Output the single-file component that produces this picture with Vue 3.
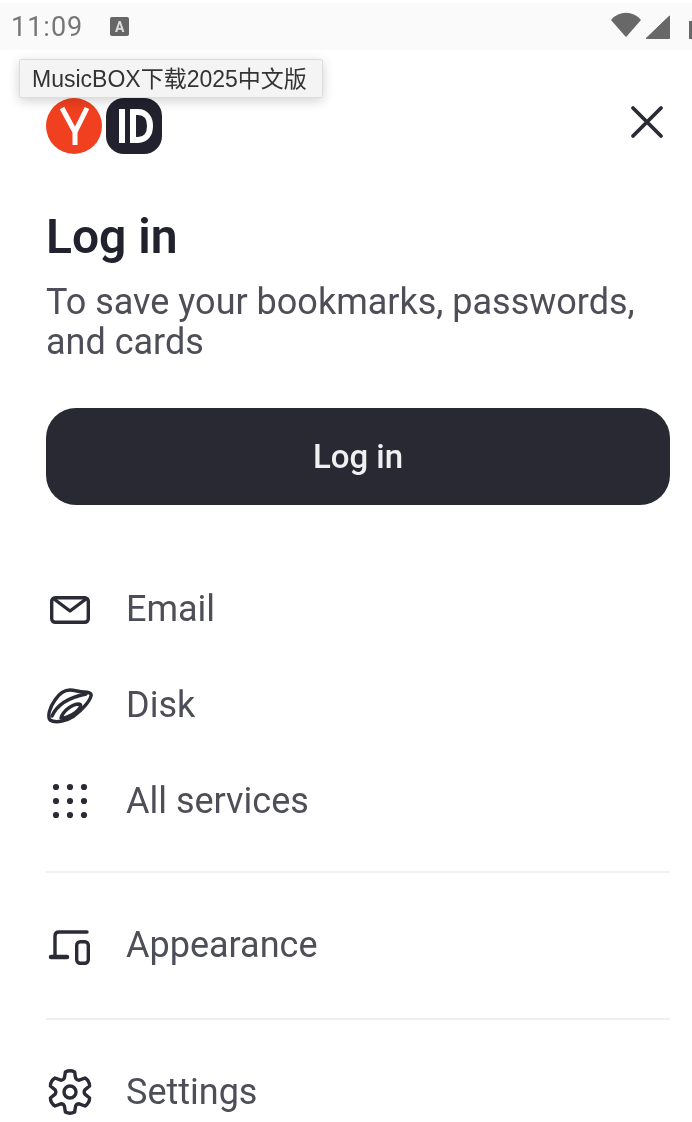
<template>
  <div class="screen">
    <div class="status-bar">
      <div class="status-left">
        <span class="time">11:09</span>
        <span class="notif"><span class="notif-a">A</span></span>
      </div>
      <div class="status-right">
        <svg class="wifi" width="30" height="25" viewBox="0 0 30 25">
          <path d="M1 8C5 3.500 10 1.500 15 1.500S25 3.500 29 8L15 24z" fill="#686868" stroke="#686868" stroke-width="1.500" stroke-linejoin="round" />
        </svg>
        <svg width="25" height="24" viewBox="0 0 25 24">
          <path d="M1 23.500 L24.500 1 V23.500z" fill="#686868" stroke="#686868" stroke-linejoin="round" />
        </svg>
        <span class="battery"></span>
      </div>
    </div>

    <div class="tooltip">MusicBOX下载2025中文版</div>

    <main class="sheet">
      <header class="top-row">
        <div class="logo">
          <span class="logo-y">
            <svg width="56" height="56" viewBox="0 0 56 56">
              <path d="M16 10 L29 34 L41 10 M29 32 V47" fill="none" stroke="#fff" stroke-width="5" />
            </svg>
          </span>
          <span class="logo-id">
            <svg width="56" height="56" viewBox="0 0 56 56">
              <path d="M16 11 V45" fill="none" stroke="#fff" stroke-width="6" />
              <path d="M27 14 H32 C40 14 44 20 44 28 C44 36 40 42 32 42 H27 Z" fill="none" stroke="#fff" stroke-width="6" />
            </svg>
          </span>
        </div>
        <button class="close" aria-label="Close">
          <svg width="34" height="34" viewBox="0 0 34 34">
            <path d="M3 3 L31 31 M31 3 L3 31" stroke="#2b2b36" stroke-width="3.800" stroke-linecap="round" />
          </svg>
        </button>
      </header>

      <h1>Log in</h1>
      <p class="sub">To save your bookmarks, passwords, and cards</p>
      <button class="login">Log in</button>

      <ul class="menu first">
        <li>
          <svg class="ico" width="44" height="44" viewBox="0 0 44 44">
            <rect x="3.700" y="10.700" width="36.600" height="24.600" rx="3.500" />
            <path d="M6 12 L22 24 L38 12" />
          </svg>
          Email
        </li>
        <li>
          <svg class="ico" width="44" height="44" viewBox="0 0 44 44">
            <path d="M2 37C-1 33 2 24 7 17C11 11 16 7 22 7C27 7 31 9 36 9C40 9 44 10 43 13C42 18 34 27 26 33C20 37 8 41 2 37Z" />
            <path d="M4 33C8 24 18 15 38 11" />
            <path d="M13 35C15 28 24 21 31 21C34 21 33 25 28 29C23 33 15 36 13 35Z" />
          </svg>
          Disk
        </li>
        <li>
          <svg class="ico dots" width="44" height="44" viewBox="0 0 44 44">
            <circle v-for="d in dots" :key="d.x + '-' + d.y" :cx="d.x" :cy="d.y" r="3.100" />
          </svg>
          All services
        </li>
      </ul>

      <ul class="menu">
        <li>
          <svg class="ico" width="44" height="44" viewBox="0 0 44 44">
            <path d="M39 9 H11 C8.500 9 7 10.500 7 13 V33" />
            <path class="base" d="M3 34 H19" />
            <rect x="28.700" y="18.700" width="11.600" height="21.600" rx="3.500" />
          </svg>
          Appearance
        </li>
      </ul>

      <ul class="menu">
        <li>
          <svg class="ico" width="44" height="44" viewBox="0 0 44 44">
            <path :d="gearPath" />
            <circle cx="22" cy="22" r="6" />
          </svg>
          Settings
        </li>
      </ul>
    </main>
  </div>
</template>

<script setup>
const positions = [8, 22, 36]
const dots = positions.flatMap((y) => positions.map((x) => ({ x, y })))

function point(deg, r) {
  const a = (deg * Math.PI) / 180
  return `${(22 + r * Math.cos(a)).toFixed(2)} ${(22 + r * Math.sin(a)).toFixed(2)}`
}

// six flat lobes with a deep valley between each
let gearPath = `M${point(-90 - 13, 20.5)}`
for (let i = 0; i < 6; i++) {
  const a = -90 + 60 * i
  gearPath += ` Q${point(a, 22.5)} ${point(a + 13, 20.5)}`
  gearPath += ` L${point(a + 22, 15)}`
  gearPath += ` Q${point(a + 30, 13.5)} ${point(a + 38, 15)}`
  gearPath += ` L${point(a + 47, 20.5)}`
}
gearPath += 'Z'
</script>

<style scoped>
.screen {
  position: relative;
  width: 692px;
  height: 1122px;
  overflow: hidden;
  background: #fff;
  font-family: Roboto, "Noto Sans CJK SC", sans-serif;
  color: #2b2b36;
}

.status-bar {
  margin-top: 3px;
  height: 47px;
  background: #fafafa;
  display: flex;
  justify-content: space-between;
  align-items: center;
  padding: 0 0 0 11px;
  filter: blur(0.7px);
}

.status-left {
  display: flex;
  align-items: center;
  gap: 27px;
}

.time {
  font-size: 27px;
  color: #777;
  letter-spacing: 1px;
}

.notif {
  width: 19px;
  height: 19px;
  background: #666;
  border-radius: 2px;
  display: flex;
  align-items: center;
  justify-content: center;
}

.notif-a {
  font-size: 14px;
  font-weight: 700;
  color: #ddd;
}

.status-right {
  display: flex;
  align-items: center;
  gap: 4px;
}

.wifi {
  margin-bottom: 4px;
}

.battery {
  width: 3px;
  height: 18px;
  margin: 6px 0 0 15px;
  background: #686868;
}

.tooltip {
  position: absolute;
  left: 19px;
  top: 59px;
  width: 304px;
  height: 39px;
  box-sizing: border-box;
  background: #f4f4f4;
  border: 1px solid #dcdcdc;
  border-radius: 2px;
  box-shadow: 0 3px 12px rgba(0, 0, 0, 0.18);
  color: #333;
  font-family: "Liberation Sans", "Noto Sans CJK SC", sans-serif;
  font-size: 23px;
  line-height: 38px;
  white-space: nowrap;
  padding-left: 12px;
  z-index: 2;
  filter: blur(0.3px);
}

.sheet {
  padding: 48px 22px 0 46px;
  filter: blur(0.7px);
}

.top-row {
  display: flex;
  justify-content: space-between;
  align-items: center;
  height: 56px;
}

.logo {
  display: flex;
  gap: 4px;
}

.logo-y {
  width: 56px;
  height: 56px;
  border-radius: 50%;
  background: #f0401f;
  display: flex;
}

.logo-id {
  width: 56px;
  height: 56px;
  border-radius: 18px;
  background: #21222e;
  display: flex;
}

.close {
  background: none;
  border: none;
  padding: 0;
  margin: 0 6px 8px 0;
  display: flex;
}

h1 {
  margin: 56px 0 0;
  font-size: 48px;
  line-height: 54px;
  font-weight: 600;
  color: #21222e;
}

.sub {
  margin: 18px 0 0;
  font-size: 36px;
  line-height: 40px;
  color: #4e4e58;
}

.login {
  display: block;
  width: 100%;
  height: 97px;
  margin-top: 46px;
  border: none;
  border-radius: 30px;
  background: #292933;
  color: #f0f0f0;
  font-family: inherit;
  font-size: 33px;
  font-weight: 500;
}

.menu {
  list-style: none;
  margin: 0;
  padding: 24px 0 25px;
  border-bottom: 2px solid #eef0f3;
}

.menu.first {
  margin-top: 56px;
  padding-top: 0;
  padding-bottom: 22px;
}

.menu:last-child {
  border-bottom: none;
}

.menu li {
  display: flex;
  align-items: center;
  gap: 34px;
  height: 96px;
  font-size: 36px;
  color: #4e4e58;
}

.ico {
  flex: none;
  margin-left: 2px;
  fill: none;
  stroke: #2b2b36;
  stroke-width: 3.400;
  stroke-linejoin: round;
  stroke-linecap: round;
  overflow: visible;
}

.ico .base {
  stroke-width: 4.500;
}

.ico.dots {
  fill: #2b2b36;
  stroke: none;
}
</style>
